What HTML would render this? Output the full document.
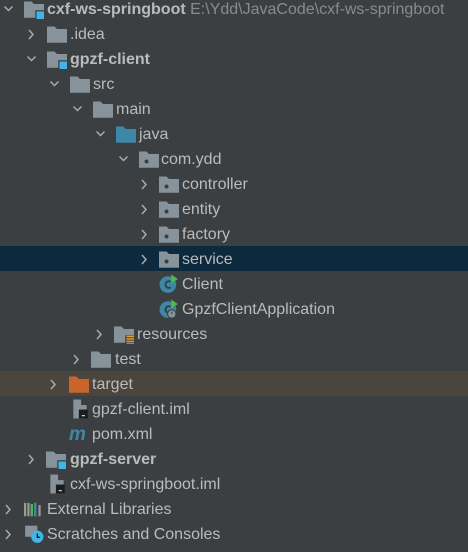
<!DOCTYPE html>
<html><head><style>
body{margin:0;width:468px;height:552px;background:#3c3f41;overflow:hidden;font-family:"Liberation Sans",sans-serif;font-size:16px;color:#bbbbbb;position:relative}
.r{position:absolute;left:0;width:468px;height:25px;line-height:25px;white-space:nowrap}
.a{position:absolute;top:0;width:10px;height:25px}
.i{position:absolute;top:3px;width:20px;height:20px;margin-left:-1px}
.t{position:absolute;top:1px}
b{font-weight:bold}
.p{color:#8a8a8a}
</style></head><body>
<svg width="0" height="0" style="position:absolute">
<defs>
<symbol id="ar" viewBox="0 0 10 25"><path d="M1.5 10.5l4 4 4-4" fill="none" stroke="#aaa" stroke-width="1.5"/></symbol>
<symbol id="ac" viewBox="0 0 10 25"><path d="M3 9l4 4.5-4 4.5" fill="none" stroke="#aaa" stroke-width="1.5"/></symbol>
<symbol id="fo" viewBox="1 0 16 16"><path d="M1 2h6l2 2h8v11H1z" fill="#87939a"/></symbol>
<symbol id="fm" viewBox="1 0 16 16"><path d="M1 2h6l2 2h8v11H1z" fill="#87939a"/><rect x="10" y="9" width="7" height="7" fill="#3c3f41"/><rect x="11" y="10" width="6" height="6" fill="#3fb5e8"/></symbol>
<symbol id="fj" viewBox="1 0 16 16"><path d="M1 2h6l2 2h8v11H1z" fill="#3d88a6"/></symbol>
<symbol id="fp" viewBox="1 0 16 16"><path d="M1 2h6l2 2h8v11H1z" fill="#87939a"/><circle cx="7" cy="10" r="1.6" fill="#3c3f41"/></symbol>
<symbol id="ft" viewBox="1 0 16 16"><path d="M1 2h6l2 2h8v11H1z" fill="#c7652b"/></symbol>
<symbol id="fr" viewBox="1 0 16 16"><path d="M1 2h6l2 2h8v11H1z" fill="#87939a"/><rect x="10" y="9" width="8" height="8" fill="#3c3f41"/><path d="M11 10h6M11 12h6M11 14h6M11 16h6" stroke="#e0a22f" stroke-width="1.2"/></symbol>
<symbol id="cl" viewBox="0 0 18 17"><circle cx="8" cy="9" r="7.5" fill="#3d88a6"/><path d="M10.5 6.5a3 3 0 1 0 0 5" fill="none" stroke="#3c3f41" stroke-width="1.8"/><path d="M11 0v8l6-4z" fill="#4fb848"/></symbol>
<symbol id="ca" viewBox="0 0 18 17"><circle cx="8" cy="9" r="7.5" fill="#3d88a6"/><path d="M10.5 6.5a3 3 0 1 0 0 5" fill="none" stroke="#3c3f41" stroke-width="1.8"/><path d="M11 0v8l6-4z" fill="#4fb848"/><circle cx="11.5" cy="13" r="3.8" fill="#87939a" stroke="#3c3f41"/><path d="M11.5 11v2" stroke="#3c3f41"/></symbol>
<symbol id="im" viewBox="0 0 18 17"><path d="M3 0h7v5h5v12H3z" fill="#87939a"/><rect x="8" y="9" width="8" height="8" fill="#1c1c1c"/><rect x="10.5" y="14" width="3" height="1" fill="#ddd"/></symbol>
</defs></svg>

<div class="r" style="top:-4px"><svg class="a" style="left:3px"><use href="#ar"/></svg><svg class="i" style="left:25px"><use href="#fm"/></svg><span class="t" style="left:47px"><b>cxf-ws-springboot</b> <span class="p">E:\Ydd\JavaCode\cxf-ws-springboot</span></span></div>
<div class="r" style="top:21px"><svg class="a" style="left:26px"><use href="#ac"/></svg><svg class="i" style="left:48px"><use href="#fo"/></svg><span class="t" style="left:70px">.idea</span></div>
<div class="r" style="top:46px"><svg class="a" style="left:26px"><use href="#ar"/></svg><svg class="i" style="left:48px"><use href="#fm"/></svg><span class="t" style="left:70px"><b>gpzf-client</b></span></div>
<div class="r" style="top:71px"><svg class="a" style="left:49px"><use href="#ar"/></svg><svg class="i" style="left:71px"><use href="#fo"/></svg><span class="t" style="left:93px">src</span></div>
<div class="r" style="top:96px"><svg class="a" style="left:72px"><use href="#ar"/></svg><svg class="i" style="left:94px"><use href="#fo"/></svg><span class="t" style="left:116px">main</span></div>
<div class="r" style="top:121px"><svg class="a" style="left:95px"><use href="#ar"/></svg><svg class="i" style="left:117px"><use href="#fj"/></svg><span class="t" style="left:139px">java</span></div>
<div class="r" style="top:146px"><svg class="a" style="left:118px"><use href="#ar"/></svg><svg class="i" style="left:140px"><use href="#fp"/></svg><span class="t" style="left:161px">com.ydd</span></div>
<div class="r" style="top:171px"><svg class="a" style="left:139px"><use href="#ac"/></svg><svg class="i" style="left:160px"><use href="#fp"/></svg><span class="t" style="left:182px">controller</span></div>
<div class="r" style="top:196px"><svg class="a" style="left:139px"><use href="#ac"/></svg><svg class="i" style="left:160px"><use href="#fp"/></svg><span class="t" style="left:182px">entity</span></div>
<div class="r" style="top:221px"><svg class="a" style="left:139px"><use href="#ac"/></svg><svg class="i" style="left:160px"><use href="#fp"/></svg><span class="t" style="left:182px">factory</span></div>
<div class="r" style="top:246px;background:#0d293e"><svg class="a" style="left:139px"><use href="#ac"/></svg><svg class="i" style="left:160px"><use href="#fp"/></svg><span class="t" style="left:182px">service</span></div>
<div class="r" style="top:271px"><svg class="i" style="left:160px"><use href="#cl"/></svg><span class="t" style="left:182px">Client</span></div>
<div class="r" style="top:296px"><svg class="i" style="left:160px"><use href="#ca"/></svg><span class="t" style="left:182px">GpzfClientApplication</span></div>
<div class="r" style="top:321px"><svg class="a" style="left:94px"><use href="#ac"/></svg><svg class="i" style="left:115px"><use href="#fr"/></svg><span class="t" style="left:137px">resources</span></div>
<div class="r" style="top:346px"><svg class="a" style="left:71px"><use href="#ac"/></svg><svg class="i" style="left:92px"><use href="#fo"/></svg><span class="t" style="left:115px">test</span></div>
<div class="r" style="top:371px;background:#4a463d"><svg class="a" style="left:48px"><use href="#ac"/></svg><svg class="i" style="left:70px"><use href="#ft"/></svg><span class="t" style="left:92px">target</span></div>
<div class="r" style="top:396px"><svg class="i" style="left:71px"><use href="#im"/></svg><span class="t" style="left:92px">gpzf-client.iml</span></div>
<div class="r" style="top:421px"><span class="t" style="left:69px;color:#3d88a6;font-weight:bold;font-style:italic;font-size:19px">m</span><span class="t" style="left:92px">pom.xml</span></div>
<div class="r" style="top:446px"><svg class="a" style="left:26px"><use href="#ac"/></svg><svg class="i" style="left:47px"><use href="#fm"/></svg><span class="t" style="left:70px"><b>gpzf-server</b></span></div>
<div class="r" style="top:471px"><svg class="i" style="left:48px"><use href="#im"/></svg><span class="t" style="left:70px">cxf-ws-springboot.iml</span></div>
<div class="r" style="top:496px"><svg class="a" style="left:3px"><use href="#ac"/></svg><svg class="i" style="left:25px" viewBox="0 0 18 17"><path d="M1 3v12M4 3v12M7 4v11M10 3v12M14 5v10" stroke-width="2" stroke="#999"/><path d="M7 4v11" stroke="#4fb848" stroke-width="2"/><path d="M10 3v12" stroke="#3d88a6" stroke-width="2"/></svg><span class="t" style="left:47px">External Libraries</span></div>
<div class="r" style="top:521px"><svg class="a" style="left:3px"><use href="#ac"/></svg><svg class="i" style="left:25px" viewBox="0 0 18 17"><rect x="1" y="1" width="11" height="10" fill="#87939a"/><circle cx="12" cy="11" r="5.5" fill="#3fb5e8"/><path d="M12 8v3.5h2.5" stroke="#1c1c1c" fill="none" stroke-width="1.2"/></svg><span class="t" style="left:47px">Scratches and Consoles</span></div>
</body></html>
